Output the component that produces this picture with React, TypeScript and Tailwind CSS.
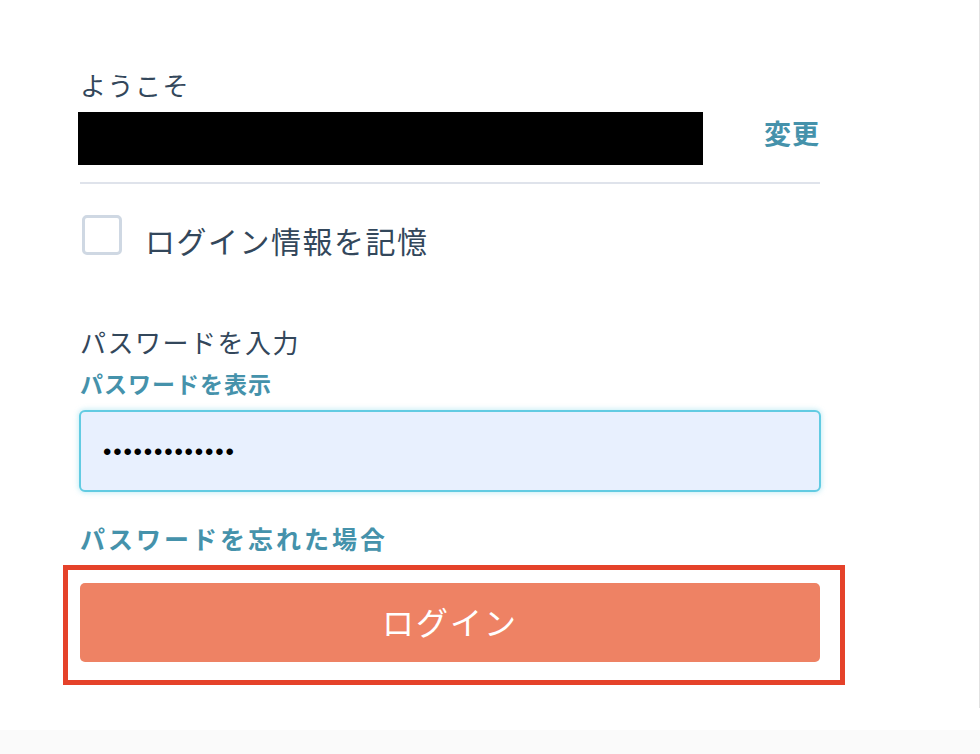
import React from 'react';

const jp = "font-['Noto_Sans_CJK_JP',sans-serif]";

export default function App() {
  return (
    <div className={`flex h-[754px] w-[980px] flex-col bg-[#fafafa] ${jp}`}>
      <div className="h-[708px] w-[980px] border-r border-[#e2e2e2] bg-white">
        <div className="ml-[80px] w-[740px] pt-[68px] text-[#33475b]">
          <div className="text-[26px] leading-[34px] tracking-[1.5px]">ようこそ</div>

          <div className="mt-[10px] flex items-start justify-between">
            <div className="-ml-[2px] h-[53px] w-[625px] bg-black" />
            <button className="mt-[4px] text-[27px] font-bold leading-[34px] tracking-[1px] text-[#4592ab]">変更</button>
          </div>

          <div className="mt-[17px] h-[2px] bg-[#dfe3eb]" />

          <label className="mt-[31px] flex items-start">
            <span className="ml-[2px] h-[40px] w-[40px] rounded-[5px] border-[3px] border-[#cfd8e3] bg-white" />
            <span className="ml-[23px] mt-[5px] text-[30px] leading-[40px] tracking-[1.5px]">ログイン情報を記憶</span>
          </label>

          <div className="mt-[65px] text-[26px] leading-[34px] tracking-[1.5px]">パスワードを入力</div>
          <button className="mt-[9px] block text-[23px] font-bold leading-[30px] tracking-[1px] text-[#4592ab]">パスワードを表示</button>

          <div className="-ml-[1px] mt-[12px] flex h-[82px] w-[742px] items-center rounded-[6px] border-2 border-[#62cbe2] bg-[#e8f0fe] pl-[22px] pt-[2px] shadow-[0_0_5px_1px_rgba(98,203,226,0.35)]">
            <span className="font-['Liberation_Sans',sans-serif] text-[24px] leading-none tracking-[1.8px] text-black">•••••••••••••</span>
          </div>

          <button className="mt-[30px] block text-[25px] font-bold leading-[32px] tracking-[3px] text-[#4592ab]">パスワードを忘れた場合</button>

          <div className="-ml-[17px] mt-[11px] w-[782px] border-[5px] border-[#e5422a] pb-[18px] pl-[12px] pr-[20px] pt-[13px]">
            <button className="flex h-[79px] w-full items-center justify-center rounded-[5px] bg-[#ee8264] pb-[4px] text-[32px] tracking-[2px] text-white">
              ログイン
            </button>
          </div>
        </div>
      </div>
      <div className="h-[22px] bg-white" />
    </div>
  );
}
